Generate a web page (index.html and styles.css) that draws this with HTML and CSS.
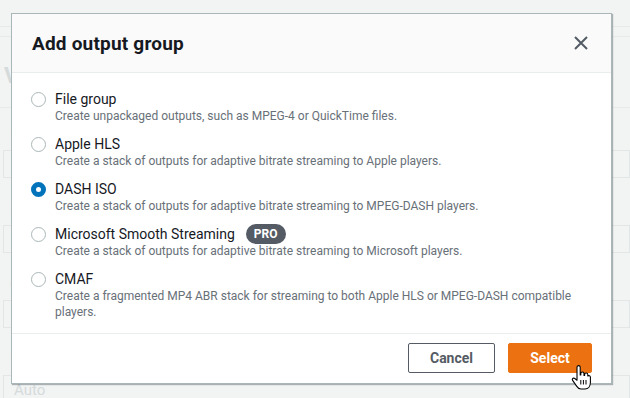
FILE: index.html
```html
<!DOCTYPE html>
<html lang="en">
<head>
  <meta charset="UTF-8" />
  <title>Add output group</title>
  <link rel="stylesheet" href="styles.css">
</head>
<body>
  <!-- Dimmed page behind the dialog -->
  <div class="page">
    <div class="topbar"></div>
    <div class="panel">
      <div class="panel-head">V</div>
      <div class="field">
        <div class="field-label">P</div>
        <div class="field-input"></div>
      </div>
      <div class="field">
        <div class="field-label">P</div>
        <div class="field-input"></div>
      </div>
      <div class="field">
        <div class="field-label">C</div>
        <div class="field-input"></div>
      </div>
      <div class="field">
        <div class="field-label">F</div>
        <div class="field-input">Auto</div>
      </div>
    </div>
  </div>

  <!-- Modal -->
  <div class="modal">
    <div class="modal-header">
      <h2>Add output group</h2>
      <button class="close" aria-label="Close">
        <svg width="14" height="14" viewBox="0 0 14 14">
          <path d="M1 1L13 13M13 1L1 13" stroke="#545b64" stroke-width="2" fill="none"/>
        </svg>
      </button>
    </div>

    <div class="modal-body">
      <div class="option">
        <span class="radio"></span>
        <div class="option-text">
          <div class="option-label">File group</div>
          <div class="option-desc">Create unpackaged outputs, such as MPEG-4 or QuickTime files.</div>
        </div>
      </div>
      <div class="option">
        <span class="radio"></span>
        <div class="option-text">
          <div class="option-label">Apple HLS</div>
          <div class="option-desc">Create a stack of outputs for adaptive bitrate streaming to Apple players.</div>
        </div>
      </div>
      <div class="option">
        <span class="radio checked"></span>
        <div class="option-text">
          <div class="option-label">DASH ISO</div>
          <div class="option-desc">Create a stack of outputs for adaptive bitrate streaming to MPEG-DASH players.</div>
        </div>
      </div>
      <div class="option">
        <span class="radio"></span>
        <div class="option-text">
          <div class="option-label">Microsoft Smooth Streaming <span class="badge">PRO</span></div>
          <div class="option-desc">Create a stack of outputs for adaptive bitrate streaming to Microsoft players.</div>
        </div>
      </div>
      <div class="option">
        <span class="radio"></span>
        <div class="option-text">
          <div class="option-label">CMAF</div>
          <div class="option-desc">Create a fragmented MP4 ABR stack for streaming to both Apple HLS or MPEG-DASH compatible players.</div>
        </div>
      </div>
    </div>

    <div class="modal-footer">
      <button class="btn btn-cancel">Cancel</button>
      <button class="btn btn-primary">Select</button>
    </div>
  </div>

  <!-- Mouse pointer over the Select button -->
  <svg class="pointer" width="20" height="25" viewBox="0 0 20 25">
    <path d="M6 2.2a1.6 1.6 0 0 1 3.2 0V10h.6V8.6a1.6 1.6 0 0 1 3.2 0V10.4h.6V9.6a1.6 1.6 0 0 1 3.2 0v1.4a1.6 1.6 0 0 1 2.6 1.2v5.4c0 3.6-2.2 6.4-5.4 6.4H10c-2 0-3.2-1-4.2-2.6L1.6 15.4c-.9-1.2.3-2.8 1.8-2.1L6 15.2Z"
          fill="#fff" stroke="#000" stroke-width="1.1" stroke-linejoin="round"/>
    <path d="M9.8 15v4.5M12.4 15v4.5M15 15v4.5" stroke="#000" stroke-width="1" fill="none"/>
  </svg>
</body>
</html>
```

FILE: styles.css
```css
/* Base */
body {
  margin: 0;
  width: 630px;
  height: 398px;
  overflow: hidden;
  position: relative;
  background-color: #f2f3f3;
  font-family: Roboto, "Liberation Sans", sans-serif;
  color: #16191f;
}

/* Faded page behind the modal */
.page {
  color: #d5dbdb;
}

.topbar {
  height: 26px;
  border-bottom: 1px solid #e8eaea;
}

.panel {
  margin-top: 9px;
  border-top: 1px solid #e8eaea;
}

.panel-head {
  height: 70px;
  padding-left: 4px;
  font-size: 22px;
  font-weight: bold;
  line-height: 78px;
  border-bottom: 1px solid #e8eaea;
}

.field {
  padding: 18px 0 0 3px;
}

.field-label {
  padding-left: 7px;
  font-size: 14px;
  line-height: 16px;
  margin-bottom: 8px;
}

.field-input {
  height: 26px;
  border: 1px solid #e3e6e6;
  margin-bottom: 5px;
  padding-left: 10px;
  font-size: 15px;
  line-height: 28px;
}

/* Modal */
.modal {
  position: absolute;
  left: 11px;
  top: 13px;
  width: 599px;
  background: #fff;
  border: 1px solid #aab7b8;
  box-shadow: 1px 1px 1px rgba(0, 28, 36, 0.3);
}

.modal-header {
  height: 58px;
  padding: 0 20px;
  background-color: #fafafa;
  border-bottom: 1px solid #eaeded;
  display: flex;
  align-items: center;
  justify-content: space-between;
}

.modal-header h2 {
  margin: 0;
  font-size: 19px;
  font-weight: bold;
  letter-spacing: 0.2px;
}

.close {
  border: none;
  background: none;
  padding: 0;
  margin-right: 3px;
  display: flex;
}

.modal-body {
  padding: 17px 20px 13px 20px;
  display: flex;
  flex-direction: column;
  gap: 11px;
}

.option {
  display: flex;
  gap: 10px;
}

.radio {
  flex: none;
  box-sizing: border-box;
  width: 15px;
  height: 15px;
  margin-top: 2px;
  margin-left: -1px;
  margin-right: -1px;
  border: 1.5px solid #aab7b8;
  border-radius: 50%;
  background: #fff;
}

.radio.checked {
  border: 5px solid #0073bb;
}

.option-label {
  font-size: 14px;
  line-height: 18px;
  display: flex;
  align-items: center;
  gap: 11px;
}

.option-desc {
  font-size: 12px;
  line-height: 16px;
  color: #687078;
}

.badge {
  display: inline-block;
  height: 20px;
  padding: 0 8px;
  border-radius: 10px;
  background-color: #545b64;
  color: #fff;
  font-size: 12px;
  font-weight: bold;
  line-height: 20px;
  margin: -1px 0;
}

.modal-footer {
  border-top: 1px solid #eaeded;
  padding: 9px 19px 10px 20px;
  display: flex;
  justify-content: flex-end;
  gap: 13px;
}

.btn {
  height: 30px;
  border-radius: 2px;
  font-family: Roboto, "Liberation Sans", sans-serif;
  font-size: 14px;
  font-weight: bold;
  cursor: pointer;
}

.btn-cancel {
  width: 87px;
  background: #fff;
  border: 1px solid #545b64;
  color: #545b64;
}

.btn-primary {
  width: 84px;
  background-color: #ec7211;
  border: 1px solid #ec7211;
  color: #fff;
}

.pointer {
  position: absolute;
  left: 571px;
  top: 365px;
}
```
